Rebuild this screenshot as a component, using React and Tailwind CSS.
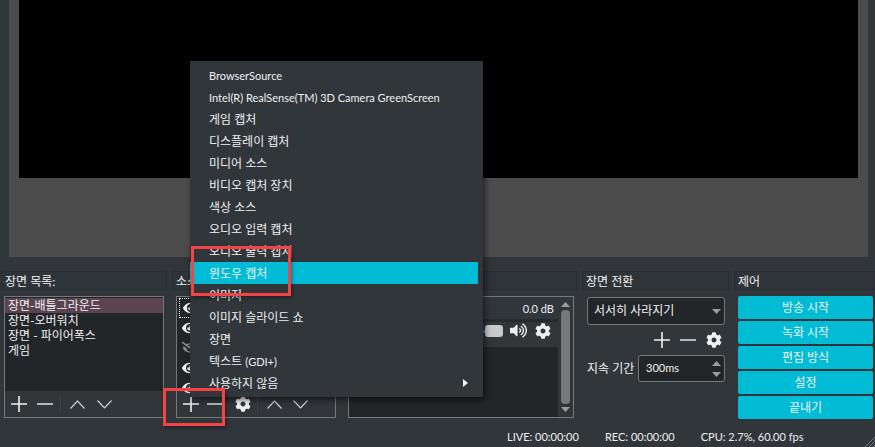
import React from 'react';
import { FaCog, FaEye, FaEyeSlash, FaVolumeUp } from 'react-icons/fa';

const menuItems = [
    <span className="text-[11px]">BrowserSource</span>,
    <span className="text-[11px]">Intel(R) RealSense(TM) 3D Camera GreenScreen</span>,
    '게임 캡처',
    '디스플레이 캡처',
    '미디어 소스',
    '비디오 캡처 장치',
    '색상 소스',
    '오디오 입력 캡처',
    '오디오 출력 캡처',
    '윈도우 캡처',
    '이미지',
    '이미지 슬라이드 쇼',
    '장면',
    <>텍스트 <span className="text-[11px]">(GDI+)</span></>,
    '사용하지 않음',
];

const scenes = ['장면-배틀그라운드', '장면-오버워치', '장면 - 파이어폭스', '게임'];
const controls = ['방송 시작', '녹화 시작', '편집 방식', '설정', '끝내기'];

function Plus() {
    return (
        <svg width="16" height="16" viewBox="0 0 16 16" className="shrink-0">
            <path d="M0 8H16M8 0V16" stroke="#eff0f1" strokeWidth="1.6" fill="none" />
        </svg>
    );
}

function Minus() {
    return (
        <svg width="16" height="16" viewBox="0 0 16 16" className="shrink-0">
            <path d="M0 8H16" stroke="#d5d7d8" strokeWidth="1.6" fill="none" />
        </svg>
    );
}

function Up() {
    return (
        <svg width="15" height="9" viewBox="0 0 15 9" className="shrink-0">
            <path d="M0.5 8.5L7.5 1L14.5 8.5" stroke="#d5d7d8" strokeWidth="1.1" fill="none" />
        </svg>
    );
}

function Down() {
    return (
        <svg width="15" height="9" viewBox="0 0 15 9" className="shrink-0">
            <path d="M0.5 0.5L7.5 8L14.5 0.5" stroke="#d5d7d8" strokeWidth="1.1" fill="none" />
        </svg>
    );
}

function Arrow({ up }) {
    return (
        <svg width="9" height="5" viewBox="0 0 9 5" className="shrink-0">
            <path d={up ? 'M4.5 0L9 5H0Z' : 'M0 0H9L4.5 5Z'} fill="#9a9c9e" />
        </svg>
    );
}

function Dock({ title, className, children }) {
    return (
        <div className={`flex flex-col shrink-0 ${className}`}>
            <div className="h-[19px] bg-[#2f3438] border border-[#2a2e32] pl-[3px] text-[12px] leading-[19px] text-[#eff0f1]">{title}</div>
            <div className="mt-[6px] h-[123px]">{children}</div>
        </div>
    );
}

export default function App() {
    return (
        <div className="relative w-[875px] h-[447px] overflow-hidden bg-[#31363b] text-[#eff0f1] text-[12px] font-['Lato','Noto_Sans_CJK_KR',sans-serif]">
            {/* Preview */}
            <div className="ml-[9px] w-[859px] h-[257px] px-[10px] bg-[#4c4c4c]">
                <div className="h-[178px] bg-black" />
            </div>

            {/* Docks */}
            <div className="mt-[14px] pl-[1px] flex gap-[5px]">
                <Dock title="장면 목록:" className="w-[166px]">
                    <div className="mx-[3px] h-[122px] border border-[#76797c] flex flex-col">
                        <div className="h-[94px] bg-[#232629] pt-px">
                            {scenes.map((scene, i) => (
                                <div key={scene} className={`h-[15px] pl-[3px] leading-[15px] ${i === 0 ? 'bg-[#5a4450]' : ''}`}>{scene}</div>
                            ))}
                        </div>
                        <div className="flex-1 flex items-center pl-[6px]">
                            <Plus />
                            <div className="ml-[10px]"><Minus /></div>
                            <div className="ml-[7px] w-px h-[18px] bg-[#3d4246]" />
                            <div className="ml-[9px]"><Up /></div>
                            <div className="ml-[12px]"><Down /></div>
                        </div>
                    </div>
                </Dock>

                <Dock title="소스 목록:" className="w-[168px]">
                    <div className="mx-[4px] h-[122px] border border-[#76797c] flex flex-col">
                        <div className="h-[94px] bg-[#232629] pt-px pl-[2px]">
                            {[0, 1, 2, 3, 4].map((i) => (
                                <div key={i} className={`h-[20px] pl-[3px] flex items-center ${i === 0 ? 'border border-dotted border-[#eff0f1]' : ''}`}>
                                    {i === 2 ? <FaEyeSlash size={16} className="text-[#8a8c8e]" /> : <FaEye size={16} className="text-[#eff0f1]" />}
                                </div>
                            ))}
                        </div>
                        <div className="flex-1 flex items-center pl-[6px]">
                            <Plus />
                            <div className="ml-[8px]"><Minus /></div>
                            <div className="ml-[12px]"><FaCog size={16} /></div>
                            <div className="ml-[6px] w-px h-[18px] bg-[#3d4246]" />
                            <div className="ml-[9px]"><Up /></div>
                            <div className="ml-[11px]"><Down /></div>
                        </div>
                    </div>
                </Dock>

                <Dock title="오디오 믹서" className="w-[232px]">
                    <div className="mx-[3px] h-[122px] border border-[#76797c] flex">
                        <div className="flex-1 flex flex-col">
                            <div className="h-[50px] relative">
                                <div className="pt-[4px] pr-[4px] text-right text-[11px] leading-[16px] text-[#eff0f1]">0.0 dB</div>
                                <div className="mt-[2px] h-[3px] bg-[#272b2e]" />
                                <div className="absolute left-[134px] top-[33px] w-[2px] h-[3px] bg-[#1d8a9c]" />
                                <div className="absolute left-[136px] top-[28px] w-[18px] h-[12px] rounded-[3px] bg-[#c8c9ca]" />
                                <FaVolumeUp size={17} className="absolute left-[161px] top-[25px]" />
                                <FaCog size={16} className="absolute left-[186px] top-[26px]" />
                            </div>
                            <div className="flex-1 bg-[#232629]" />
                        </div>
                        <div className="w-[15px] flex flex-col items-center pt-[5px] pb-[5px]">
                            <Arrow up />
                            <div className="mt-[3px] flex-1 w-[9px] rounded-[4px] bg-[#76797c]" />
                            <div className="mt-[3px]"><Arrow /></div>
                        </div>
                    </div>
                </Dock>

                <Dock title="장면 전환" className="w-[147px]">
                    <div className="pl-[5px] pr-[4px] flex flex-col">
                        <div className="mt-px h-[28px] flex items-center justify-between pl-[6px] pr-[3px] border border-[#76797c] rounded-[3px] bg-[#232629]">
                            <span>서서히 사라지기</span>
                            <Arrow />
                        </div>
                        <div className="mt-[7px] pr-[3px] flex items-center justify-end">
                            <Plus />
                            <div className="ml-[10px]"><Minus /></div>
                            <div className="ml-[10px]"><FaCog size={16} /></div>
                        </div>
                        <div className="mt-[7px] flex items-center justify-between">
                            <span>지속 기간</span>
                            <div className="w-[87px] h-[27px] flex items-center justify-between pl-[7px] pr-[3px] border border-[#76797c] rounded-[3px] bg-[#232629]">
                                <span className="text-[11px]">300ms</span>
                                <div className="flex flex-col gap-[6px]"><Arrow up /><Arrow /></div>
                            </div>
                        </div>
                    </div>
                </Dock>

                <Dock title="제어" className="w-[141px]">
                    <div className="pl-[4px] pr-[2px] flex flex-col gap-[2px]">
                        {controls.map((label) => (
                            <div key={label} className="h-[23px] flex items-center justify-center rounded-[2px] bg-[#02bcd6]">{label}</div>
                        ))}
                    </div>
                </Dock>
            </div>

            {/* Status bar */}
            <div className="mt-[10px] pl-[507px] flex gap-[26px] text-[11px] leading-[16px]">
                <span>LIVE: 00:00:00</span>
                <span>REC: 00:00:00</span>
                <span>CPU: 2.7%, 60.00 fps</span>
            </div>
            <svg width="10" height="10" viewBox="0 0 10 10" className="absolute right-0 bottom-0">
                <path d="M0 10L10 0M4 10L10 4M8 10L10 8" stroke="#76797c" strokeWidth="1" fill="none" />
            </svg>

            {/* Add source menu */}
            <div className="absolute left-[190px] top-[61px] w-[293px] h-[336px] py-[3px] pr-[5px] bg-[#31363b] shadow-[2px_3px_6px_rgba(0,0,0,0.55)]">
                {menuItems.map((item, i) => (
                    <div key={i} className={`relative h-[22px] pl-[19px] leading-[23px] ${i === 9 ? 'bg-[#02bcd6]' : ''}`}>
                        {item}
                        {i === 14 && (
                            <svg width="5" height="8" viewBox="0 0 5 8" className="absolute right-[10px] top-[7px]">
                                <path d="M0 0L5 4L0 8Z" fill="#eff0f1" />
                            </svg>
                        )}
                    </div>
                ))}
            </div>

            {/* Red highlights */}
            <div className="absolute left-[191px] top-[246px] w-[100px] h-[50px] border-[3px] border-[#f44245] shadow-[1px_2px_4px_rgba(0,0,0,0.4)]" />
            <div className="absolute left-[163px] top-[388px] w-[62px] h-[38px] border-[3px] border-[#f44245] shadow-[1px_2px_4px_rgba(0,0,0,0.4)]" />
        </div>
    );
}
